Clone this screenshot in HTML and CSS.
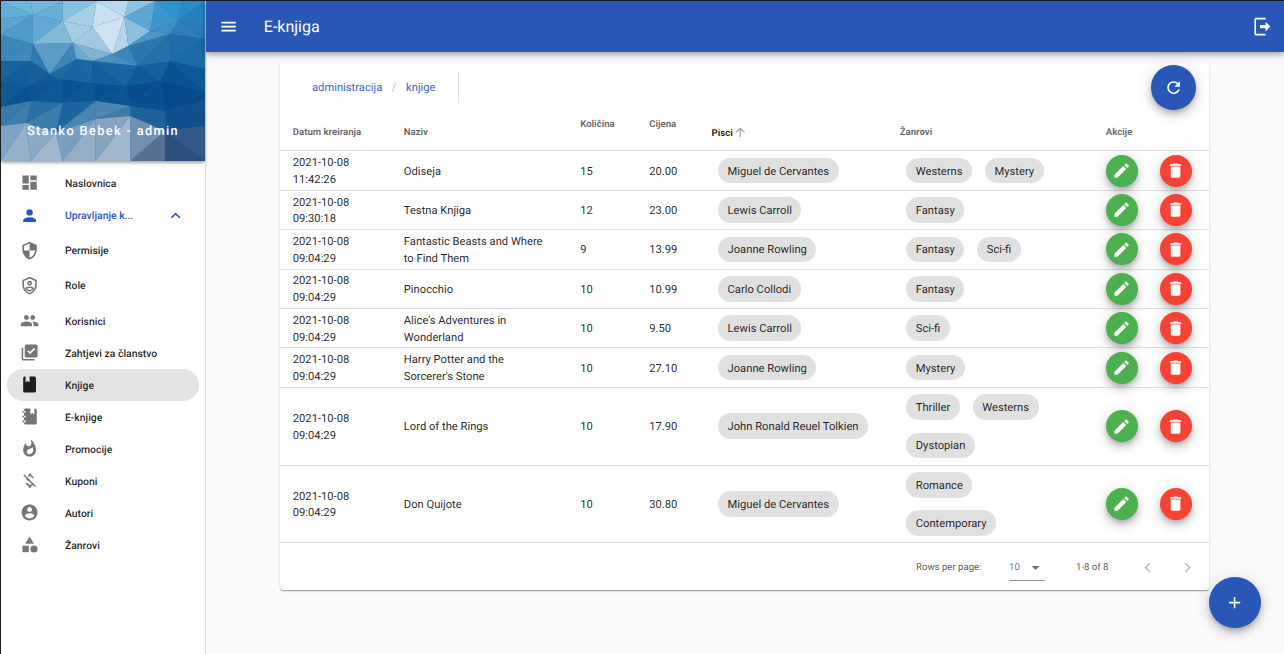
FILE: index.html
```html
<!DOCTYPE html>
<html lang="hr">
<head>
<meta charset="utf-8">
<title>E-knjiga</title>
<link rel="stylesheet" href="styles.css">
</head>
<body>
<div class="app">
  <aside class="sidebar">
    <div class="hero">
      <svg class="mosaic" viewBox="0 0 205 160" preserveAspectRatio="none">
        <rect width="205" height="160" fill="#1c6aa8"/>
        <polygon points="0,0 30,0 32,14" fill="#6db7dd"/><polygon points="0,0 32,14 0,18" fill="#5fb0d8"/>
        <polygon points="30,0 62,0 32,14" fill="#72b8de"/><polygon points="62,0 62,20 32,14" fill="#68aed6"/>
        <polygon points="62,0 96,0 62,20" fill="#84c1e2"/><polygon points="96,0 92,26 62,20" fill="#a6cfe6"/>
        <polygon points="96,0 128,0 124,16" fill="#bcdaec"/><polygon points="96,0 124,16 92,26" fill="#c9e0ee"/>
        <polygon points="128,0 155,0 124,16" fill="#8fc3e2"/><polygon points="155,0 150,30 124,16" fill="#5da5d2"/>
        <polygon points="155,0 182,0 178,20" fill="#2f93cb"/><polygon points="155,0 178,20 150,30" fill="#3b96cc"/>
        <polygon points="182,0 205,0 178,20" fill="#2b8ac4"/><polygon points="205,0 205,24 178,20" fill="#2580bc"/>
        <polygon points="0,18 32,14 0,34" fill="#5aa4cf"/><polygon points="32,14 32,43 0,34" fill="#4f9ac7"/>
        <polygon points="32,14 62,20 32,43" fill="#63a9d1"/><polygon points="62,20 72,42 32,43" fill="#83bad9"/>
        <polygon points="62,20 92,26 72,42" fill="#a7cde3"/><polygon points="92,26 112,53 72,42" fill="#a3c7de"/>
        <polygon points="92,26 124,16 112,53" fill="#cfe2ee"/><polygon points="124,16 128,45 112,53" fill="#b6d4e6"/>
        <polygon points="124,16 150,30 128,45" fill="#8dbedb"/><polygon points="150,30 170,33 128,45" fill="#4d97c6"/>
        <polygon points="150,30 178,20 170,33" fill="#3f8fc3"/><polygon points="178,20 205,38 170,33" fill="#2d7fb8"/>
        <polygon points="178,20 205,24 205,38" fill="#2a7cb6"/>
        <polygon points="0,34 32,43 0,60" fill="#3c87b9"/><polygon points="32,43 30,60 0,60" fill="#3f8aba"/>
        <polygon points="32,43 49,73 30,60" fill="#2d79ae"/><polygon points="32,43 72,42 49,73" fill="#5d9cc5"/>
        <polygon points="72,42 76,58 49,73" fill="#3f86b7"/><polygon points="72,42 92,60 76,58" fill="#6fa9cd"/>
        <polygon points="72,42 112,53 92,60" fill="#80b3d2"/><polygon points="112,53 137,65 92,60" fill="#4a8fbf"/>
        <polygon points="112,53 128,45 137,65" fill="#3a86b9"/><polygon points="128,45 170,33 137,65" fill="#2a77ae"/>
        <polygon points="170,33 170,60 137,65" fill="#2470a9"/><polygon points="170,33 205,38 170,60" fill="#1f6ca6"/>
        <polygon points="205,38 205,68 170,60" fill="#1a6aa4"/>
        <polygon points="0,60 30,60 0,80" fill="#17639f"/><polygon points="30,60 28,84 0,80" fill="#125d9a"/>
        <polygon points="30,60 49,73 28,84" fill="#165f9b"/><polygon points="49,73 60,78 28,84" fill="#0f5997"/>
        <polygon points="49,73 76,58 60,78" fill="#20699f"/><polygon points="76,58 90,82 60,78" fill="#1a659f"/>
        <polygon points="76,58 92,60 90,82" fill="#1d68a1"/><polygon points="92,60 125,85 90,82" fill="#135f9b"/>
        <polygon points="92,60 137,65 125,85" fill="#1a659f"/><polygon points="137,65 160,80 125,85" fill="#0e5a97"/>
        <polygon points="137,65 170,60 160,80" fill="#12609c"/><polygon points="170,60 205,90 160,80" fill="#0a5191"/>
        <polygon points="170,60 205,68 205,90" fill="#0d5896"/>
        <polygon points="0,80 28,84 0,106" fill="#0e5896"/><polygon points="28,84 30,100 0,106" fill="#0a5190"/>
        <polygon points="28,84 60,78 30,100" fill="#0c5493"/><polygon points="60,78 62,102 30,100" fill="#0f5896"/>
        <polygon points="60,78 90,82 62,102" fill="#0a5393"/><polygon points="90,82 95,100 62,102" fill="#0d5694"/>
        <polygon points="90,82 125,85 95,100" fill="#085091"/><polygon points="125,85 130,105 95,100" fill="#0b5392"/>
        <polygon points="125,85 160,80 130,105" fill="#074d8d"/><polygon points="160,80 165,110 130,105" fill="#0a508e"/>
        <polygon points="160,80 205,90 165,110" fill="#05498a"/><polygon points="205,90 205,100 165,110" fill="#074b8a"/>
        <polygon points="0,106 30,100 0,125" fill="#3a78a7"/><polygon points="30,100 25,122 0,125" fill="#3f7eac"/>
        <polygon points="30,100 62,102 25,122" fill="#2a6ea3"/><polygon points="62,102 55,132 25,122" fill="#3d7dab"/>
        <polygon points="62,102 95,100 55,132" fill="#1d659e"/><polygon points="95,100 95,118 55,132" fill="#4a85b0"/>
        <polygon points="95,100 130,105 95,118" fill="#4d86b0"/><polygon points="130,105 130,115 95,118" fill="#3f7ba8"/>
        <polygon points="130,105 165,110 130,115" fill="#1c619a"/><polygon points="165,110 165,130 130,115" fill="#1f6098"/>
        <polygon points="165,110 205,100 165,130" fill="#0f5190"/><polygon points="205,100 205,125 165,130" fill="#134f8a"/>
        <polygon points="0,125 25,122 0,160" fill="#7fa3c2"/><polygon points="25,122 30,160 0,160" fill="#95b0c9"/>
        <polygon points="25,122 55,132 30,160" fill="#8ba8c4"/><polygon points="55,132 62,160 30,160" fill="#a0b7ce"/>
        <polygon points="55,132 95,118 62,160" fill="#7c9dbd"/><polygon points="95,118 95,160 62,160" fill="#94aec8"/>
        <polygon points="95,118 130,115 95,160" fill="#86a3c0"/><polygon points="130,115 130,160 95,160" fill="#a3b8cd"/>
        <polygon points="130,115 165,130 130,160" fill="#7390b0"/><polygon points="165,130 165,160 130,160" fill="#566f93"/>
        <polygon points="165,130 205,125 205,160" fill="#315a87"/><polygon points="165,130 205,160 165,160" fill="#2c4f7d"/>
      </svg>
      <span class="hero-name">Stanko Bebek - admin</span>
    </div>
    <nav class="nav">
      <a class="nav-item"><svg class="ico" viewBox="0 0 24 24"><path d="M13,3V9H21V3M13,21H21V11H13M3,21H11V15H3M3,13H11V3H3V13Z"/></svg><span>Naslovnica</span></a>
      <a class="nav-item nav-group"><svg class="ico" viewBox="0 0 24 24"><path d="M12,4A4,4 0 0,1 16,8A4,4 0 0,1 12,12A4,4 0 0,1 8,8A4,4 0 0,1 12,4M12,14C16.42,14 20,15.79 20,18V20H4V18C4,15.79 7.58,14 12,14Z"/></svg><span class="nav-group-label">Upravljanje k...</span><svg class="ico nav-chevron" viewBox="0 0 24 24"><path d="M7.41,15.41L12,10.83L16.59,15.41L18,14L12,8L6,14L7.41,15.41Z"/></svg></a>
      <a class="nav-item nav-tall"><svg class="ico" viewBox="0 0 24 24"><path d="M12 1L3 5v6c0 5.55 3.84 10.74 9 12 5.16-1.26 9-6.45 9-12V5l-9-4zm0 10.99h7c-.53 4.12-3.28 7.79-7 8.94V12H5V6.3l7-3.11v8.8z"/></svg><span>Permisije</span></a>
      <a class="nav-item nav-tall"><svg class="ico" viewBox="0 0 24 24"><path d="M21,11C21,16.55 17.16,21.74 12,23C6.84,21.74 3,16.55 3,11V5L12,1L21,5V11M12,21C15.75,20 19,15.54 19,11.22V6.3L12,3.18L5,6.3V11.22C5,15.54 8.25,20 12,21M12,6A3,3 0 0,1 15,9A3,3 0 0,1 12,12A3,3 0 0,1 9,9A3,3 0 0,1 12,6M12,8A1,1 0 0,0 11,9A1,1 0 0,0 12,10A1,1 0 0,0 13,9A1,1 0 0,0 12,8M12,13C14,13 17.5,14 17.5,16C16.3,17.8 14.3,19 12,19.5C9.7,19 7.7,17.8 6.5,16C6.5,14 10,13 12,13M12,15C10.6,15 9.4,15.5 8.8,16.2C9.7,17 10.8,17.4 12,17.6C13.2,17.4 14.3,17 15.2,16.2C14.6,15.5 13.4,15 12,15Z"/></svg><span>Role</span></a>
      <a class="nav-item nav-after-tall"><svg class="ico" viewBox="0 0 24 24"><path d="M16 11c1.66 0 2.99-1.34 2.99-3S17.66 5 16 5c-1.66 0-3 1.34-3 3s1.34 3 3 3zm-8 0c1.66 0 2.99-1.34 2.99-3S9.66 5 8 5C6.34 5 5 6.34 5 8s1.34 3 3 3zm0 2c-2.33 0-7 1.17-7 3.5V19h14v-2.5c0-2.33-4.67-3.5-7-3.5zm8 0c-.29 0-.62.02-.97.05 1.16.84 1.97 1.97 1.97 3.45V19h6v-2.5c0-2.33-4.67-3.5-7-3.5z"/></svg><span>Korisnici</span></a>
      <a class="nav-item"><svg class="ico" viewBox="0 0 24 24"><path d="M20 2H8c-1.1 0-2 .9-2 2v12c0 1.1.9 2 2 2h12c1.1 0 2-.9 2-2V4c0-1.1-.9-2-2-2zm-7.53 12L9 10.5l1.4-1.41 2.07 2.08L17.6 6 19 7.41 12.47 14zM4 6H2v14c0 1.1.9 2 2 2h14v-2H4V6z"/></svg><span>Zahtjevi za članstvo</span></a>
      <a class="nav-item nav-active"><svg class="ico" viewBox="0 0 24 24"><path d="M18,22A2,2 0 0,0 20,20V4C20,2.89 19.1,2 18,2H12V9L9.5,7.5L7,9V2H6A2,2 0 0,0 4,4V20A2,2 0 0,0 6,22H18Z"/></svg><span>Knjige</span></a>
      <a class="nav-item"><svg class="ico" viewBox="0 0 24 24"><path d="M3,7V5H5V4C5,2.89 5.9,2 7,2H13V9L15.5,7.5L18,9V2H19C20.05,2 21,2.95 21,4V20C21,21.05 20.05,22 19,22H7C5.95,22 5,21.05 5,20V19H3V17H5V13H3V11H5V7H3M7,11H5V13H7V11M7,7V5H5V7H7M7,19V17H5V19H7Z"/></svg><span>E-knjige</span></a>
      <a class="nav-item"><svg class="ico" viewBox="0 0 24 24"><path d="M13.5.67s.74 2.65.74 4.8c0 2.06-1.35 3.73-3.41 3.73-2.07 0-3.63-1.67-3.63-3.73l.03-.36C5.21 7.51 4 10.62 4 14c0 4.42 3.58 8 8 8s8-3.58 8-8C20 8.61 17.41 3.8 13.5.67zM11.71 19c-1.78 0-3.22-1.4-3.22-3.14 0-1.62 1.05-2.76 2.81-3.12 1.77-.36 3.6-1.21 4.62-2.58.39 1.29.59 2.65.59 4.04 0 2.65-2.15 4.8-4.8 4.8z"/></svg><span>Promocije</span></a>
      <a class="nav-item"><svg class="ico" viewBox="0 0 24 24"><path d="M12.5 6.9c1.78 0 2.44.85 2.5 2.1h2.21c-.07-1.72-1.12-3.3-3.21-3.81V3h-3v2.16c-.53.12-1.03.3-1.48.54l1.47 1.47c.41-.17.91-.27 1.51-.27zM5.33 4.06L4.06 5.33 7.5 8.77c0 2.08 1.56 3.21 3.91 3.91l3.51 3.51c-.34.48-1.05.91-2.42.91-2.06 0-2.87-.92-2.98-2.1h-2.2c.12 2.19 1.76 3.42 3.68 3.83V21h3v-2.15c.96-.18 1.82-.55 2.45-1.12l2.22 2.22 1.27-1.27L5.33 4.06z"/></svg><span>Kuponi</span></a>
      <a class="nav-item"><svg class="ico" viewBox="0 0 24 24"><path d="M12 2C6.48 2 2 6.48 2 12s4.48 10 10 10 10-4.48 10-10S17.52 2 12 2zm0 3c1.66 0 3 1.34 3 3s-1.34 3-3 3-3-1.34-3-3 1.34-3 3-3zm0 14.2c-2.5 0-4.71-1.28-6-3.22.03-1.99 4-3.08 6-3.08 1.99 0 5.97 1.09 6 3.08-1.29 1.94-3.5 3.22-6 3.22z"/></svg><span>Autori</span></a>
      <a class="nav-item"><svg class="ico" viewBox="0 0 24 24"><path d="M12 2l-5.5 9h11z"/><circle cx="17.5" cy="17.5" r="4.5"/><path d="M3 13.5h8v8H3z"/></svg><span>Žanrovi</span></a>
    </nav>
  </aside>

  <div class="content">
    <header class="topbar">
      <svg class="ico topbar-menu" viewBox="0 0 24 24"><path d="M3 18h18v-2H3v2zm0-5h18v-2H3v2zm0-7v2h18V6H3z"/></svg>
      <span class="topbar-title">E-knjiga</span>
      <svg class="ico topbar-logout" viewBox="0 0 24 24"><path d="M5 1h12v2H5v18h12v2H5a2 2 0 0 1-2-2V3a2 2 0 0 1 2-2z"/><path d="M10 10h7V6l6 6-6 6v-4h-7z"/></svg>
    </header>

    <main class="main">
      <section class="card">
        <div class="toolbar">
          <div class="crumbs"><a>administracija</a><span class="crumb-sep">/</span><a>knjige</a></div>
          <span class="toolbar-divider"></span>
          <button class="fab fab-refresh"><svg class="ico" viewBox="0 0 24 24"><path d="M17.65,6.35C16.2,4.9 14.21,4 12,4A8,8 0 0,0 4,12A8,8 0 0,0 12,20C15.73,20 18.84,17.45 19.73,14H17.65C16.83,16.33 14.61,18 12,18A6,6 0 0,1 6,12A6,6 0 0,1 12,6C13.66,6 15.14,6.69 16.22,7.78L13,11H20V4L17.65,6.35Z"/></svg></button>
        </div>

        <table class="grid">
          <colgroup>
            <col class="c-date"><col class="c-name"><col class="c-qty"><col class="c-price"><col class="c-auth"><col class="c-genre"><col class="c-act">
          </colgroup>
          <thead>
            <tr>
              <th>Datum kreiranja</th>
              <th>Naziv</th>
              <th class="th-raised">Količina</th>
              <th class="th-raised">Cijena</th>
              <th class="th-sorted">Pisci <svg class="sort-ico" viewBox="0 0 24 24"><path d="M13,20H11V8L5.5,13.5L4.08,12.08L12,4.16L19.92,12.08L18.5,13.5L13,8V20Z"/></svg></th>
              <th>Žanrovi</th>
              <th>Akcije</th>
            </tr>
          </thead>
          <tbody>
            <tr>
              <td>2021-10-08 11:42:26</td><td>Odiseja</td><td>15</td><td>20.00</td>
              <td><div class="chips"><span class="chip">Miguel de Cervantes</span></div></td>
              <td><div class="chips"><span class="chip">Westerns</span><span class="chip">Mystery</span></div></td>
              <td><div class="actions"><button class="act act-edit"><svg class="ico" viewBox="0 0 24 24"><path d="M20.71,7.04C21.1,6.65 21.1,6 20.71,5.63L18.37,3.29C18,2.9 17.35,2.9 16.96,3.29L15.12,5.12L18.87,8.87M3,17.25V21H6.75L17.81,9.93L14.06,6.18L3,17.25Z"/></svg></button><button class="act act-del"><svg class="ico" viewBox="0 0 24 24"><path d="M19,4H15.5L14.5,3H9.5L8.5,4H5V6H19M6,19A2,2 0 0,0 8,21H16A2,2 0 0,0 18,19V7H6V19Z"/></svg></button></div></td>
            </tr>
            <tr>
              <td>2021-10-08 09:30:18</td><td>Testna Knjiga</td><td>12</td><td>23.00</td>
              <td><div class="chips"><span class="chip">Lewis Carroll</span></div></td>
              <td><div class="chips"><span class="chip">Fantasy</span></div></td>
              <td><div class="actions"><button class="act act-edit"><svg class="ico" viewBox="0 0 24 24"><path d="M20.71,7.04C21.1,6.65 21.1,6 20.71,5.63L18.37,3.29C18,2.9 17.35,2.9 16.96,3.29L15.12,5.12L18.87,8.87M3,17.25V21H6.75L17.81,9.93L14.06,6.18L3,17.25Z"/></svg></button><button class="act act-del"><svg class="ico" viewBox="0 0 24 24"><path d="M19,4H15.5L14.5,3H9.5L8.5,4H5V6H19M6,19A2,2 0 0,0 8,21H16A2,2 0 0,0 18,19V7H6V19Z"/></svg></button></div></td>
            </tr>
            <tr>
              <td>2021-10-08 09:04:29</td><td>Fantastic Beasts and Where to Find Them</td><td>9</td><td>13.99</td>
              <td><div class="chips"><span class="chip">Joanne Rowling</span></div></td>
              <td><div class="chips"><span class="chip">Fantasy</span><span class="chip">Sci-fi</span></div></td>
              <td><div class="actions"><button class="act act-edit"><svg class="ico" viewBox="0 0 24 24"><path d="M20.71,7.04C21.1,6.65 21.1,6 20.71,5.63L18.37,3.29C18,2.9 17.35,2.9 16.96,3.29L15.12,5.12L18.87,8.87M3,17.25V21H6.75L17.81,9.93L14.06,6.18L3,17.25Z"/></svg></button><button class="act act-del"><svg class="ico" viewBox="0 0 24 24"><path d="M19,4H15.5L14.5,3H9.5L8.5,4H5V6H19M6,19A2,2 0 0,0 8,21H16A2,2 0 0,0 18,19V7H6V19Z"/></svg></button></div></td>
            </tr>
            <tr>
              <td>2021-10-08 09:04:29</td><td>Pinocchio</td><td>10</td><td>10.99</td>
              <td><div class="chips"><span class="chip">Carlo Collodi</span></div></td>
              <td><div class="chips"><span class="chip">Fantasy</span></div></td>
              <td><div class="actions"><button class="act act-edit"><svg class="ico" viewBox="0 0 24 24"><path d="M20.71,7.04C21.1,6.65 21.1,6 20.71,5.63L18.37,3.29C18,2.9 17.35,2.9 16.96,3.29L15.12,5.12L18.87,8.87M3,17.25V21H6.75L17.81,9.93L14.06,6.18L3,17.25Z"/></svg></button><button class="act act-del"><svg class="ico" viewBox="0 0 24 24"><path d="M19,4H15.5L14.5,3H9.5L8.5,4H5V6H19M6,19A2,2 0 0,0 8,21H16A2,2 0 0,0 18,19V7H6V19Z"/></svg></button></div></td>
            </tr>
            <tr>
              <td>2021-10-08 09:04:29</td><td>Alice's Adventures in Wonderland</td><td>10</td><td>9.50</td>
              <td><div class="chips"><span class="chip">Lewis Carroll</span></div></td>
              <td><div class="chips"><span class="chip">Sci-fi</span></div></td>
              <td><div class="actions"><button class="act act-edit"><svg class="ico" viewBox="0 0 24 24"><path d="M20.71,7.04C21.1,6.65 21.1,6 20.71,5.63L18.37,3.29C18,2.9 17.35,2.9 16.96,3.29L15.12,5.12L18.87,8.87M3,17.25V21H6.75L17.81,9.93L14.06,6.18L3,17.25Z"/></svg></button><button class="act act-del"><svg class="ico" viewBox="0 0 24 24"><path d="M19,4H15.5L14.5,3H9.5L8.5,4H5V6H19M6,19A2,2 0 0,0 8,21H16A2,2 0 0,0 18,19V7H6V19Z"/></svg></button></div></td>
            </tr>
            <tr>
              <td>2021-10-08 09:04:29</td><td>Harry Potter and the Sorcerer's Stone</td><td>10</td><td>27.10</td>
              <td><div class="chips"><span class="chip">Joanne Rowling</span></div></td>
              <td><div class="chips"><span class="chip">Mystery</span></div></td>
              <td><div class="actions"><button class="act act-edit"><svg class="ico" viewBox="0 0 24 24"><path d="M20.71,7.04C21.1,6.65 21.1,6 20.71,5.63L18.37,3.29C18,2.9 17.35,2.9 16.96,3.29L15.12,5.12L18.87,8.87M3,17.25V21H6.75L17.81,9.93L14.06,6.18L3,17.25Z"/></svg></button><button class="act act-del"><svg class="ico" viewBox="0 0 24 24"><path d="M19,4H15.5L14.5,3H9.5L8.5,4H5V6H19M6,19A2,2 0 0,0 8,21H16A2,2 0 0,0 18,19V7H6V19Z"/></svg></button></div></td>
            </tr>
            <tr class="row-tall">
              <td>2021-10-08 09:04:29</td><td>Lord of the Rings</td><td>10</td><td>17.90</td>
              <td><div class="chips"><span class="chip">John Ronald Reuel Tolkien</span></div></td>
              <td><div class="chips"><span class="chip">Thriller</span><span class="chip">Westerns</span><span class="chip">Dystopian</span></div></td>
              <td><div class="actions"><button class="act act-edit"><svg class="ico" viewBox="0 0 24 24"><path d="M20.71,7.04C21.1,6.65 21.1,6 20.71,5.63L18.37,3.29C18,2.9 17.35,2.9 16.96,3.29L15.12,5.12L18.87,8.87M3,17.25V21H6.75L17.81,9.93L14.06,6.18L3,17.25Z"/></svg></button><button class="act act-del"><svg class="ico" viewBox="0 0 24 24"><path d="M19,4H15.5L14.5,3H9.5L8.5,4H5V6H19M6,19A2,2 0 0,0 8,21H16A2,2 0 0,0 18,19V7H6V19Z"/></svg></button></div></td>
            </tr>
            <tr class="row-tall">
              <td>2021-10-08 09:04:29</td><td>Don Quijote</td><td>10</td><td>30.80</td>
              <td><div class="chips"><span class="chip">Miguel de Cervantes</span></div></td>
              <td><div class="chips"><span class="chip">Romance</span><span class="chip">Contemporary</span></div></td>
              <td><div class="actions"><button class="act act-edit"><svg class="ico" viewBox="0 0 24 24"><path d="M20.71,7.04C21.1,6.65 21.1,6 20.71,5.63L18.37,3.29C18,2.9 17.35,2.9 16.96,3.29L15.12,5.12L18.87,8.87M3,17.25V21H6.75L17.81,9.93L14.06,6.18L3,17.25Z"/></svg></button><button class="act act-del"><svg class="ico" viewBox="0 0 24 24"><path d="M19,4H15.5L14.5,3H9.5L8.5,4H5V6H19M6,19A2,2 0 0,0 8,21H16A2,2 0 0,0 18,19V7H6V19Z"/></svg></button></div></td>
            </tr>
          </tbody>
        </table>

        <footer class="pager">
          <span class="pager-label">Rows per page:</span>
          <span class="pager-select"><span>10</span><svg class="pager-caret" viewBox="0 0 24 24"><path d="M7,10L12,15L17,10H7Z"/></svg></span>
          <span class="pager-range">1-8 of 8</span>
          <svg class="pager-nav" viewBox="0 0 24 24"><path d="M15.41,16.58L10.83,12L15.41,7.41L14,6L8,12L14,18L15.41,16.58Z"/></svg>
          <svg class="pager-nav pager-next" viewBox="0 0 24 24"><path d="M8.59,16.58L13.17,12L8.59,7.41L10,6L16,12L10,18L8.59,16.58Z"/></svg>
        </footer>
      </section>
      <button class="fab fab-add"><svg class="ico" viewBox="0 0 24 24"><path d="M19,13H13V19H11V13H5V11H11V5H13V11H19V13Z"/></svg></button>
    </main>
  </div>
</div>
</body>
</html>
```

FILE: styles.css
```css
* { box-sizing: border-box; }
html, body { margin: 0; height: 100%; overflow: hidden; }
body {
  font-family: Roboto, "Liberation Sans", sans-serif;
  font-size: 11.2px;
  color: rgba(0, 0, 0, .87);
  background: #1f1f1f;
  text-rendering: geometricPrecision;
}
.app {
  display: flex;
  height: 653px;
  margin: 1px 0 0 1px;
  background: #fafafa;
}
.ico { width: 19.2px; height: 19.2px; fill: currentColor; flex: none; display: block; }

/* sidebar */
.sidebar {
  width: 205px;
  flex: none;
  background: #fff;
  border-right: 1px solid #e0e0e0;
  display: flex;
  flex-direction: column;
}
.hero {
  position: relative;
  height: 160px;
  flex: none;
  box-shadow: 0 2px 3px rgba(0, 0, 0, .35);
  display: flex;
  align-items: flex-end;
  justify-content: center;
  padding-bottom: 20px;
}
.mosaic { position: absolute; inset: 0; width: 100%; height: 100%; display: block; }
.hero-name {
  position: relative;
  color: #fff;
  font-size: 12.8px;
  font-weight: 500;
  letter-spacing: 1.35px;
  line-height: 19px;
}
.nav { padding: 6px 6px 0; display: flex; flex-direction: column; }
.nav-item {
  display: flex;
  align-items: center;
  height: 32px;
  padding-left: 13.4px;
  font-size: 10.4px;
  font-weight: 500;
  border-radius: 16px;
  color: rgba(0, 0, 0, .87);
}
.nav-item .ico { margin-right: 25.4px; color: rgba(0, 0, 0, .54); }
.nav-group { height: 33.5px; color: #2857b5; }
.nav-group .ico { color: #2857b5; }
.nav-group-label { width: 101.5px; }
.nav-group .nav-chevron { margin-right: 0; }
.nav-tall { height: 35.5px; }
.nav-after-tall { margin-top: 1.5px; }
.nav-active { background: #e3e3e3; }
.nav-active .ico { color: rgba(0, 0, 0, .87); }

/* top bar */
.content { flex: 1; min-width: 0; display: flex; flex-direction: column; }
.topbar {
  position: relative;
  z-index: 2;
  height: 51.2px;
  flex: none;
  background: #2857b5;
  color: #fff;
  display: flex;
  align-items: center;
  padding: 0 13px;
  box-shadow: 0 2px 4px -1px rgba(0, 0, 0, .2), 0 4px 5px rgba(0, 0, 0, .14), 0 1px 10px rgba(0, 0, 0, .12);
}
.topbar-title { font-size: 16px; font-weight: 400; margin-left: 25.6px; flex: 1; line-height: 24px; }

/* main */
.main { position: relative; flex: 1; padding: 10px 0 0 74px; }
.card {
  width: 929px;
  background: #fff;
  border-radius: 3px;
  box-shadow: 0 2px 1px -1px rgba(0, 0, 0, .2), 0 1px 1px rgba(0, 0, 0, .14), 0 1px 3px rgba(0, 0, 0, .12);
}
.toolbar { display: flex; align-items: center; height: 50px; padding: 0 13.2px 0 32px; }
.crumbs { display: flex; align-items: center; font-size: 11.2px; color: #2857b5; opacity: .9; }
.crumb-sep { color: rgba(0, 0, 0, .38); margin: 0 9.6px; }
.toolbar-divider { width: 1px; height: 32px; background: #e0e0e0; margin-left: 22px; }
.fab {
  border: 0;
  padding: 0;
  border-radius: 50%;
  background: #2857b5;
  color: #fff;
  display: flex;
  align-items: center;
  justify-content: center;
  box-shadow: 0 3px 5px -1px rgba(0, 0, 0, .2), 0 6px 10px rgba(0, 0, 0, .14), 0 1px 18px rgba(0, 0, 0, .12);
}
.fab-refresh { width: 44.8px; height: 44.8px; margin-left: auto; }
.fab-add { position: absolute; width: 51.2px; height: 51.2px; left: 1003.4px; top: 525px; }

/* table */
.grid { width: 929px; table-layout: fixed; border-collapse: separate; border-spacing: 0; }
.c-date { width: 111px; } .c-name { width: 176.4px; } .c-qty { width: 69px; } .c-price { width: 62.4px; }
.c-auth { width: 188.2px; } .c-genre { width: 206px; } .c-act { width: 116px; }
.grid th {
  height: 39.2px;
  padding: 2px 12.8px 0;
  text-align: left;
  font-size: 9.6px;
  font-weight: 700;
  color: rgba(0, 0, 0, .6);
  border-bottom: 1px solid #e0e0e0;
  vertical-align: middle;
}
.grid th.th-raised { padding-bottom: 16px; }
.grid th.th-sorted { color: rgba(0, 0, 0, .87); }
.sort-ico { width: 14.4px; height: 14.4px; margin-left: -2px; fill: rgba(0, 0, 0, .38); vertical-align: -3.5px; }
.grid td {
  height: 39.4px;
  padding: 3px 12.8px 0;
  line-height: 16.8px;
  border-bottom: 1px solid #e0e0e0;
  vertical-align: middle;
}
.grid td:nth-child(n+5) { padding-top: 0; }
.grid .row-tall td { height: 77.8px; }
.chips { display: flex; flex-wrap: wrap; }
.chip {
  display: inline-flex;
  align-items: center;
  height: 25.6px;
  margin: 6.4px;
  padding: 3px 9.6px 0;
  border-radius: 12.8px;
  background: #e0e0e0;
  white-space: nowrap;
}
.actions { display: flex; gap: 22px; }
.act {
  width: 32px;
  height: 32px;
  border: 0;
  padding: 0;
  border-radius: 50%;
  color: #fff;
  display: flex;
  align-items: center;
  justify-content: center;
  box-shadow: 0 3px 5px -1px rgba(0, 0, 0, .2), 0 6px 10px rgba(0, 0, 0, .14), 0 1px 18px rgba(0, 0, 0, .12);
}
.act-edit { background: #4caf50; }
.act-del { background: #f44336; }

/* footer */
.pager { display: flex; align-items: center; height: 46.6px; padding: 2px 0 0 636px; font-size: 9.6px; color: rgba(0, 0, 0, .6); }
.pager-label { width: 93px; color: rgba(0, 0, 0, .7); }
.pager-select {
  width: 36px;
  height: 25px;
  margin-top: 1px;
  display: flex;
  align-items: center;
  justify-content: space-between;
  border-bottom: 1px solid rgba(0, 0, 0, .42);
}
.pager-caret { width: 19.2px; height: 19.2px; fill: rgba(0, 0, 0, .54); margin-right: 0; }
.pager-range { margin-left: 31px; width: 32px; white-space: nowrap; color: rgba(0, 0, 0, .7); }
.pager-nav { width: 19.2px; height: 19.2px; fill: rgba(0, 0, 0, .26); margin-left: 30px; }
.pager-next { margin-left: 20.8px; }
```
